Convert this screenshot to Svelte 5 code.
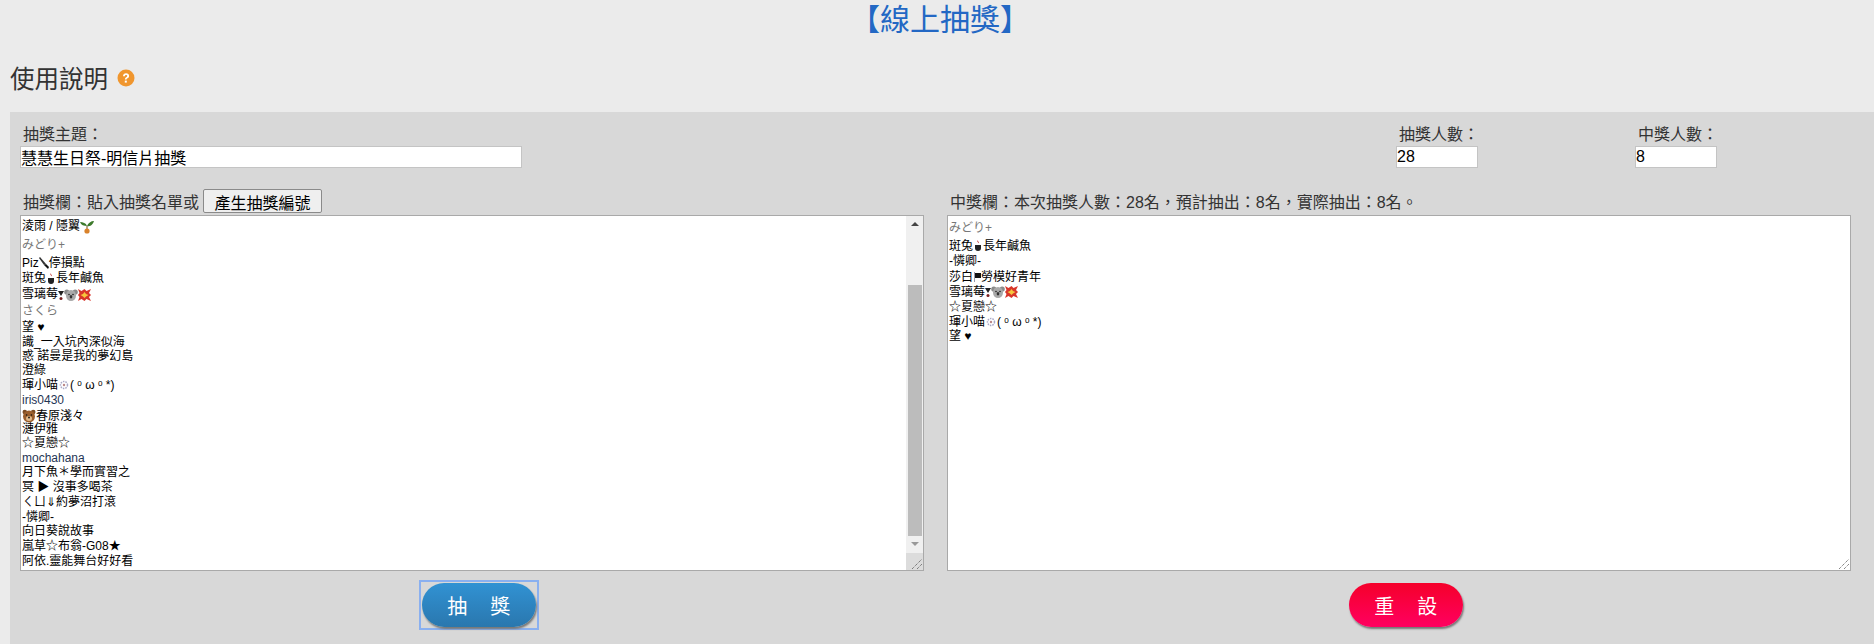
<script>
  // each row: line height as in the reference (fallback fonts make them uneven), then text / icon parts
  const drawRows = [
    { h: 17, parts: ["淩雨 / 隱翼", "@sprout"] },
    { h: 20, tone: "kana", parts: ["みどり", "+"] },
    { h: 16, parts: ["Piz", "@knife", "停損點"] },
    { h: 15, parts: ["斑兔", "@cup", "長年鹹魚"] },
    { h: 17, parts: ["雪璃莓", "@heart", " ", "@koala", "  ", "@boom"] },
    { h: 17, tone: "kana", parts: ["さくら"] },
    { h: 15, parts: ["望 ♥"] },
    { h: 14, parts: ["識_一入坑內深似海"] },
    { h: 14, parts: ["惑 諾曼是我的夢幻島"] },
    { h: 15, parts: ["澄綠"] },
    { h: 14, parts: ["琿小喵", "@snow", "( ᵒ ω ᵒ *)"] },
    { h: 17, tone: "latin", parts: ["iris0430"] },
    { h: 14, parts: ["@bear", "春原淺々"] },
    { h: 13, parts: ["漣伊雅"] },
    { h: 15, parts: ["☆夏戀☆"] },
    { h: 14, tone: "latin", parts: ["mochahana"] },
    { h: 14, parts: ["月下魚＊學而實習之"] },
    { h: 16, parts: ["冥 ▶ 沒事多喝茶"] },
    { h: 15, parts: ["ㄑㄩ⇓約夢沼打滾"] },
    { h: 14, parts: ["-憐卿-"] },
    { h: 15, parts: ["向日葵說故事"] },
    { h: 15, parts: ["嵐草☆布翁-G08★"] },
    { h: 14, parts: ["阿依.靈能舞台好好看"] },
  ];

  const winRows = [
    { h: 21, tone: "kana", parts: ["みどり", "+"] },
    { h: 14, parts: ["斑兔", "@cup", "長年鹹魚"] },
    { h: 16, parts: ["-憐卿-"] },
    { h: 16, parts: ["莎白", "@flag", "勞模好青年"] },
    { h: 14, parts: ["雪璃莓", "@heart", " ", "@koala", "  ", "@boom"] },
    { h: 16, parts: ["☆夏戀☆"] },
    { h: 14, parts: ["琿小喵", "@snow", "( ᵒ ω ᵒ *)"] },
    { h: 14, parts: ["望 ♥"] },
  ];

  const iconWidths = { sprout: 14, knife: 10, cup: 10, heart: 6, koala: 14, boom: 13, snow: 12, bear: 14, flag: 8 };
</script>

{#snippet icon(name)}
  <svg class="emoji" width={iconWidths[name]} height="14" viewBox="0 0 {iconWidths[name]} 14" aria-hidden="true">
    {#if name === "sprout"}
      <path d="M7 6C6 3 3 2 0 2c1 3 4 4 7 4zM7 6c1-3 4-5 7-5-1 3-3 6-7 5z" fill="#3d7a2c" />
      <path d="M6.500 6h1v3h-1z" fill="#6b4a1c" />
      <circle cx="7" cy="11" r="2.600" fill="#d9822b" />
    {:else if name === "knife"}
      <path d="M0 2l1-1 6 7-2 1z" fill="#333" />
      <path d="M5 9l2-1 3 3-1 2z" fill="#111" />
    {:else if name === "cup"}
      <path d="M4 2c2 0 0 1 2 2" stroke="#c55" fill="none" />
      <path d="M2 6h6v3a3 3 0 0 1-3 3 3 3 0 0 1-3-3z" fill="#222" />
    {:else if name === "heart"}
      <path d="M0 3h6L3 8z" fill="#222" />
      <circle cx="3" cy="10.500" r="1.500" fill="#7a1f1f" />
    {:else if name === "koala"}
      <circle cx="2.800" cy="4" r="2.600" fill="#8a8a8a" />
      <circle cx="11.200" cy="4" r="2.600" fill="#8a8a8a" />
      <ellipse cx="7" cy="7.500" rx="5" ry="5.500" fill="#a9a9a9" />
      <circle cx="5" cy="6.500" r=".8" fill="#222" />
      <circle cx="9" cy="6.500" r=".8" fill="#222" />
      <ellipse cx="7" cy="8.800" rx="1.300" ry="1.800" fill="#333" />
    {:else if name === "boom"}
      <path d="M0 1l3.500 2L6.500 1l2 2 4.500-2-2 4 2 2-2 2 2 4-4.500-2-2 2-3-2L0 13l1.500-4L0 7l1.500-2z" fill="#d8352a" />
      <path d="M6.500 4l1.500 2 2.500 1L8 8.500 6.500 10 5 8.500 2.500 7 5 6z" fill="#f6c63c" />
    {:else if name === "snow"}
      <circle cx="6" cy="7" r="3.500" fill="none" stroke="#a9a9c8" stroke-width="1.500" stroke-dasharray="1.500 1" />
      <circle cx="6" cy="7" r="1.200" fill="#b88" />
    {:else if name === "bear"}
      <circle cx="2.800" cy="3" r="2.300" fill="#7a4a22" />
      <circle cx="11.200" cy="3" r="2.300" fill="#7a4a22" />
      <circle cx="7" cy="7.500" r="6" fill="#9a5e2c" />
      <ellipse cx="7" cy="9.500" rx="3" ry="2.500" fill="#e0b98a" />
      <circle cx="4.600" cy="6" r=".8" fill="#111" />
      <circle cx="9.400" cy="6" r=".8" fill="#111" />
      <circle cx="7" cy="8.500" r=".9" fill="#111" />
    {:else if name === "flag"}
      <path d="M2 3h6v5H2z" fill="#111" />
      <path d="M1 2h1v10H1z" fill="#99a" />
    {/if}
  </svg>
{/snippet}

{#snippet grip()}
  <svg class="grip" viewBox="0 0 14 14" aria-hidden="true">
    <path d="M3 13L13 3M8 13l5-5" stroke="#555" stroke-width="1" stroke-dasharray="1 1" fill="none" />
  </svg>
{/snippet}

{#snippet nameRows(rows)}
  {#each rows as row}
    <div class="name {row.tone ?? ''}" style:height="{row.h}px" style:line-height="{row.h}px">
      {#each row.parts as part}
        {#if part.startsWith("@")}
          {@render icon(part.slice(1))}
        {:else}
          {part}
        {/if}
      {/each}
    </div>
  {/each}
{/snippet}

<div class="page">
  <h1><a href="#top">【線上抽獎】</a></h1>
  <h2>
    使用說明
    <svg class="help" viewBox="0 0 18 18" aria-label="help">
      <circle cx="9" cy="9" r="8.500" fill="#f0962e" />
      <path d="M6 7.200C6 5.300 7.300 4.300 9.100 4.300c1.800 0 3 1 3 2.600 0 1.300-.8 1.900-1.600 2.400-.7.400-.9.700-.9 1.300H7.900c0-1.200.4-1.800 1.200-2.300.7-.4 1.100-.7 1.100-1.300 0-.6-.5-1-1.100-1-.7 0-1.200.4-1.200 1.200z" fill="#fff" />
      <rect x="7.800" y="11.600" width="2" height="2" fill="#fff" />
    </svg>
  </h2>

  <section class="panel">
    <div class="meta">
      <label class="field topic">
        <span>抽獎主題：</span>
        <input type="text" value="慧慧生日祭-明信片抽獎" />
      </label>
      <label class="field count">
        <span>抽獎人數：</span>
        <input type="text" value="28" />
      </label>
      <label class="field count">
        <span>中獎人數：</span>
        <input type="text" value="8" />
      </label>
    </div>

    <div class="columns">
      <div class="col">
        <div class="col-head">抽獎欄：貼入抽獎名單或<button class="gen" type="button">產生抽獎編號</button></div>
        <div class="box">
          <div class="list">{@render nameRows(drawRows)}</div>
          <div class="scrollbar">
            <div class="arrow up"></div>
            <div class="track"><div class="thumb"></div></div>
            <div class="arrow down"></div>
            <div class="corner">{@render grip()}</div>
          </div>
        </div>
        <div class="actions">
          <span class="focus"><button class="pill blue" type="button">抽　獎</button></span>
        </div>
      </div>

      <div class="col">
        <div class="col-head">中獎欄：本次抽獎人數：28名，預計抽出：8名，實際抽出：8名。</div>
        <div class="box">
          <div class="list">{@render nameRows(winRows)}</div>
          <div class="corner-only">{@render grip()}</div>
        </div>
        <div class="actions">
          <span class="focus plain"><button class="pill red" type="button">重　設</button></span>
        </div>
      </div>
    </div>
  </section>
</div>

<style>
  :global(body) {
    margin: 0;
    background: #ebebeb;
  }

  .page {
    width: 1874px;
    height: 644px;
    overflow: hidden;
    font-family: "Liberation Sans", "Noto Sans CJK TC", sans-serif;
    color: #333;
  }

  h1 {
    margin: 0;
    height: 36px;
    padding: 2px 0 0 6px;
    box-sizing: border-box;
    font-size: 30px;
    line-height: 36px;
    font-weight: 400;
    text-align: center;
  }

  h1 a {
    color: #2368c4;
    text-decoration: none;
  }

  h2 {
    display: flex;
    align-items: center;
    gap: 9px;
    margin: 0;
    height: 76px;
    padding: 7px 0 0 10px;
    box-sizing: border-box;
    font-size: 24.5px;
    font-weight: 400;
    color: #333;
  }

  .help {
    width: 18px;
    height: 18px;
  }

  .panel {
    margin-left: 10px;
    height: 532px;
    background: #d8d8d8;
  }

  .meta {
    display: flex;
    padding: 12px 157px 0 10px;
    height: 66px;
    box-sizing: border-box;
  }

  .field {
    display: flex;
    flex-direction: column;
    font-size: 16px;
    color: #333;
  }

  .field span {
    height: 22px;
    line-height: 22px;
    padding-left: 3px;
    white-space: nowrap;
  }

  .field input {
    box-sizing: border-box;
    height: 22px;
    width: 100%;
    padding: 0;
    border: 1px solid #c4c4c4;
    background: #fff;
    font: inherit;
    color: #000;
    outline: none;
  }

  .topic {
    width: 502px;
    margin-right: auto;
  }

  .count {
    width: 82px;
  }

  .count + .count {
    margin-left: 157px;
  }

  .columns {
    display: grid;
    grid-template-columns: 1fr 1fr;
    column-gap: 10px;
    padding: 0 10px;
  }

  .col {
    min-width: 0;
  }

  .col-head {
    display: flex;
    align-items: center;
    height: 26px;
    margin-top: 10px;
    margin-bottom: 1px;
    padding-left: 3px;
    font-size: 16px;
    color: #333;
  }

  .gen {
    box-sizing: border-box;
    width: 119px;
    height: 24px;
    margin-left: 4px;
    padding: 0;
    border: 1px solid #8a8a8a;
    border-radius: 2px;
    background: #efefef;
    font: inherit;
    color: #000;
  }

  .box {
    position: relative;
    display: flex;
    box-sizing: border-box;
    width: 904px;
    height: 356px;
    border: 1px solid #a9a9a9;
    background: #fff;
  }

  .list {
    flex: 1;
    padding: 2px 0 0 1px;
    overflow: hidden;
    font-size: 12px;
    color: #000;
  }

  .name {
    display: flex;
    align-items: center;
    white-space: pre;
  }

  .kana {
    color: #777;
  }

  .latin {
    color: #1f3554;
  }

  .emoji {
    flex: none;
  }

  .scrollbar {
    display: flex;
    flex-direction: column;
    width: 17px;
    background: #f0f0f0;
  }

  .arrow {
    flex: none;
    height: 17px;
    position: relative;
  }

  .arrow::after {
    content: "";
    position: absolute;
    left: 5px;
    top: 6px;
    border-left: 4px solid transparent;
    border-right: 4px solid transparent;
  }

  .up::after {
    border-bottom: 4px solid #444;
  }

  .down::after {
    border-top: 4px solid #999;
  }

  .track {
    flex: 1;
    padding-top: 52px;
  }

  .thumb {
    height: 251px;
    margin: 0 1px 0 2px;
    background: #bcbcbc;
  }

  .corner {
    flex: none;
    height: 17px;
    background: #dcdcdc;
    display: flex;
    align-items: flex-end;
    justify-content: flex-end;
  }

  .corner-only {
    position: absolute;
    right: 0;
    bottom: 0;
    display: flex;
  }

  .grip {
    width: 14px;
    height: 14px;
  }

  .actions {
    display: flex;
    justify-content: center;
    margin-top: 9px;
  }

  .focus {
    display: flex;
    padding: 1px;
    border: 2px solid #8ab0f0;
  }

  .focus.plain {
    border-color: transparent;
  }

  .pill {
    box-sizing: border-box;
    width: 114px;
    height: 44px;
    padding: 0 0 0 2px;
    border: 0;
    border-radius: 22px;
    font-family: inherit;
    font-size: 20px;
    letter-spacing: 1.5px;
    color: #fff;
    box-shadow: 1px 2px 2px #777;
  }

  .blue {
    background: linear-gradient(#3192d3, #2a77ae);
  }

  .red {
    background: linear-gradient(#f5002a, #ff0060);
  }
</style>
